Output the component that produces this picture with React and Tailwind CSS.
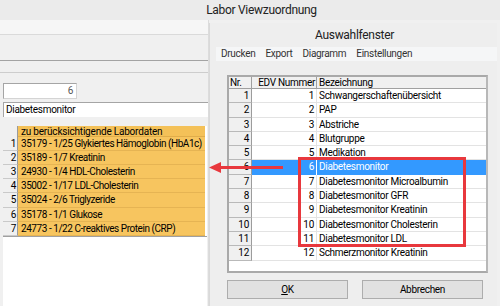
import React from "react";

const leftRows = [
  "35179 - 1/25 Glykiertes Hämoglobin (HbA1c)",
  "35189 - 1/7 Kreatinin",
  "24930 - 1/4 HDL-Cholesterin",
  "35002 - 1/17 LDL-Cholesterin",
  "35024 - 2/6 Triglyzeride",
  "35178 - 1/1 Glukose",
  "24773 - 1/22 C-reaktives Protein (CRP)",
];

const rightRows = [
  "Schwangerschaftenübersicht",
  "PAP",
  "Abstriche",
  "Blutgruppe",
  "Medikation",
  "Diabetesmonitor",
  "Diabetesmonitor Microalbumin",
  "Diabetesmonitor GFR",
  "Diabetesmonitor Kreatinin",
  "Diabetesmonitor Cholesterin",
  "Diabetesmonitor LDL",
  "Schmerzmonitor Kreatinin",
];

export default function App() {
  return (
    <div className="relative w-[500px] h-[306px] overflow-hidden bg-[#f0f0f0] text-black font-['Roboto',sans-serif] text-[10px] leading-[14px] tracking-[-0.3px]">
      {/* main title bar */}
      <div className="h-[20px] bg-[#ebebeb] flex items-center justify-center pl-[23px] text-[12px] text-[#222]">
        Labor Viewzuordnung
      </div>
      <div className="flex">
        {/* left panel */}
        <div className="w-[209px] h-[286px] flex flex-col border-r border-[#dcdcdc]">
          <div className="h-[15px] bg-[#f6f6f6] border-b border-[#dadada]" />
          <div className="h-[25px]" />
          <div className="h-[12px] border-t border-[#a3a3a3]" />
          <div className="border-t border-[#cdcdcd] flex flex-col pt-[10px] pl-[3px]">
            <div className="w-[74px] h-[16px] bg-white border border-[#d4d4d4] border-t-[#a5a5a5] border-l-[#a5a5a5] text-right pr-[3px] text-[#555] leading-[14px]">
              6
            </div>
            <div className="mt-[3px] w-[205px] h-[15px] bg-white border-t border-l border-[#a5a5a5] pl-[2px] leading-[14px]">
              Diabetesmonitor
            </div>
            {/* grid */}
            <div className="mt-[9px] w-[204px] flex flex-col bg-white tracking-[-0.45px]">
              <div className="flex h-[11px]">
                <div className="w-[15px] bg-[#f0f0f0] border-r border-[#9a9a9a]" />
                <div className="w-[187px] bg-[#f4c158] pl-[3px] leading-[11px] border-b border-[#e0ad4a] tracking-[-0.2px]">
                  zu berücksichtigende Labordaten
                </div>
              </div>
              {leftRows.map((r, i) => (
                <div key={i} className="flex h-[14.2px]">
                  <div className="w-[15px] bg-[#f0f0f0] border-r border-[#9a9a9a] border-b border-b-[#c9c9c9] text-right pr-[1px] leading-[13px]">
                    {i + 1}
                  </div>
                  <div className="w-[187px] bg-[#f7c55f] border-b border-[#e6b453] pl-[3px] leading-[13px] whitespace-nowrap overflow-hidden">
                    {r}
                  </div>
                </div>
              ))}
            </div>
            <div className="w-[204px] h-[70px] bg-white border-t border-[#a0a0a0]" />
          </div>
        </div>

        {/* dialog */}
        <div className="mt-[3px] w-[288px] h-[283px] bg-[#eeeeee] border-l border-[#d9d9d9] flex flex-col">
          <div className="h-[24px] flex items-center justify-center text-[12px] pl-[2px] text-[#222]">
            Auswahlfenster
          </div>
          <div className="ml-[6px] h-[14px] bg-[#f5f6f7] flex items-center text-[10px] text-[#333] pl-[1px]">
            <span className="px-[4px]">Drucken</span>
            <span className="px-[5px] ml-[1px]">Export</span>
            <span className="px-[5px]">Diagramm</span>
            <span className="px-[5px]">Einstellungen</span>
          </div>
          {/* table */}
          <div className="ml-[17px] mt-[14px] w-[261px] h-[198px] bg-white border-2 border-[#a9a9a9] border-r-[#b8b8b8] flex flex-col">
            <div className="flex h-[12px] leading-[12px]">
              <div className="w-[23px] bg-[#f0f0f0] border-r border-b border-[#a0a0a0] pl-[1px]">Nr.</div>
              <div className="w-[65px] bg-[#f0f0f0] border-r border-b border-[#a0a0a0] text-right pr-[1px] whitespace-nowrap">EDV Nummer</div>
              <div className="flex-1 bg-[#f0f0f0] border-b border-[#a0a0a0] pl-[2px]">Bezeichnung</div>
            </div>
            {rightRows.map((r, i) => {
              const sel = i === 5;
              return (
                <div key={i} className="flex h-[14.3px] leading-[14px]">
                  <div className="w-[23px] bg-[#f0f0f0] border-r border-b border-r-[#9c9c9c] border-b-[#b9b9b9] text-right pr-[2px]">
                    {i + 1}
                  </div>
                  <div className={sel ? "w-[65px] bg-[#3399ff] text-white border-r border-white text-right pr-[2px]" : "w-[65px] border-r border-b border-[#e3e3e3] text-right pr-[2px]"}>
                    {i + 1}
                  </div>
                  <div className={sel ? "flex-1 bg-[#3399ff] text-white pl-[2px] whitespace-nowrap" : "flex-1 border-b border-[#e3e3e3] pl-[2px] whitespace-nowrap"}>
                    {r}
                  </div>
                </div>
              );
            })}
          </div>
          {/* buttons */}
          <div className="ml-[17px] mt-[7px] flex gap-[14px]">
            <div className="w-[121px] h-[19px] bg-[#e1e1e1] border border-[#adadad] flex items-center justify-center">
              <span><span className="underline">O</span>K</span>
            </div>
            <div className="w-[121px] h-[19px] bg-[#e1e1e1] border border-[#adadad] flex items-center justify-center">
              Abbrechen
            </div>
          </div>
        </div>
      </div>

      {/* red annotation rectangle */}
      <div className="absolute left-[298px] top-[157px] w-[168px] h-[90px] border-[3px] border-[#e8383d]" />
      {/* red arrow */}
      <svg className="absolute left-[205px] top-[158px]" width="85" height="20" viewBox="205 158 85 20">
        <line x1="218" y1="167.5" x2="283" y2="167.5" stroke="#e8383d" strokeWidth="3" />
        <polygon points="209,167.5 221,162 221,173" fill="#e8383d" />
      </svg>
    </div>
  );
}
